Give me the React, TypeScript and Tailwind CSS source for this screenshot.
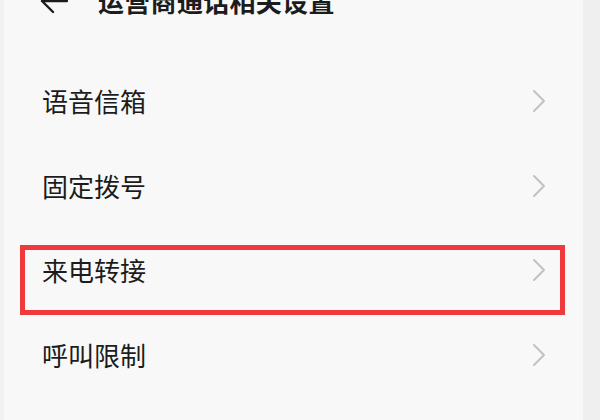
import React from "react";

const items = ["语音信箱", "固定拨号", "来电转接", "呼叫限制"];

function Chevron() {
  return (
    <svg width="14" height="24" viewBox="0 0 14 24" fill="none" className="shrink-0">
      <polyline points="2,2 12,12 2,22" stroke="#c2c2c2" strokeWidth="2" strokeLinecap="round" strokeLinejoin="round" />
    </svg>
  );
}

export default function App() {
  return (
    <div
      className="flex w-[600px] h-[420px] overflow-hidden bg-[#f8f8f8] text-[#1c1c1c]"
      style={{ fontFamily: '"Noto Sans CJK SC", "Noto Sans", sans-serif' }}
    >
      <div className="w-[4px] shrink-0 bg-[#f1f1f1]" />
      <div className="flex-1 flex flex-col">
        <div className="-mt-[12px] h-[26px] flex items-center pl-[36px]">
          <svg width="28" height="26" viewBox="0 0 28 26" fill="none" className="shrink-0">
            <path d="M2 13 H27 M13 2 L2 13 L13 24" stroke="#1c1c1c" strokeWidth="2.4" strokeLinecap="round" strokeLinejoin="round" />
          </svg>
          <span className="ml-[30px] text-[26px] leading-[26px] font-semibold tracking-[0.3px]">运营商通话相关设置</span>
        </div>
        <div className="h-[45px]" />
        {items.map((t, i) => (
          <div key={t} className="relative h-[84.5px] flex items-center pl-[38px] pr-[37px]">
            <span className="flex-1 text-[26px] leading-[30px]">{t}</span>
            <Chevron />
            {i === 2 && (
              <div className="absolute top-[17px] left-[16px] w-[545px] h-[70px] border-[5px] border-[#ef3a3d] pointer-events-none" />
            )}
          </div>
        ))}
      </div>
      <div className="w-[17px] shrink-0 bg-[#efefef]" />
    </div>
  );
}
